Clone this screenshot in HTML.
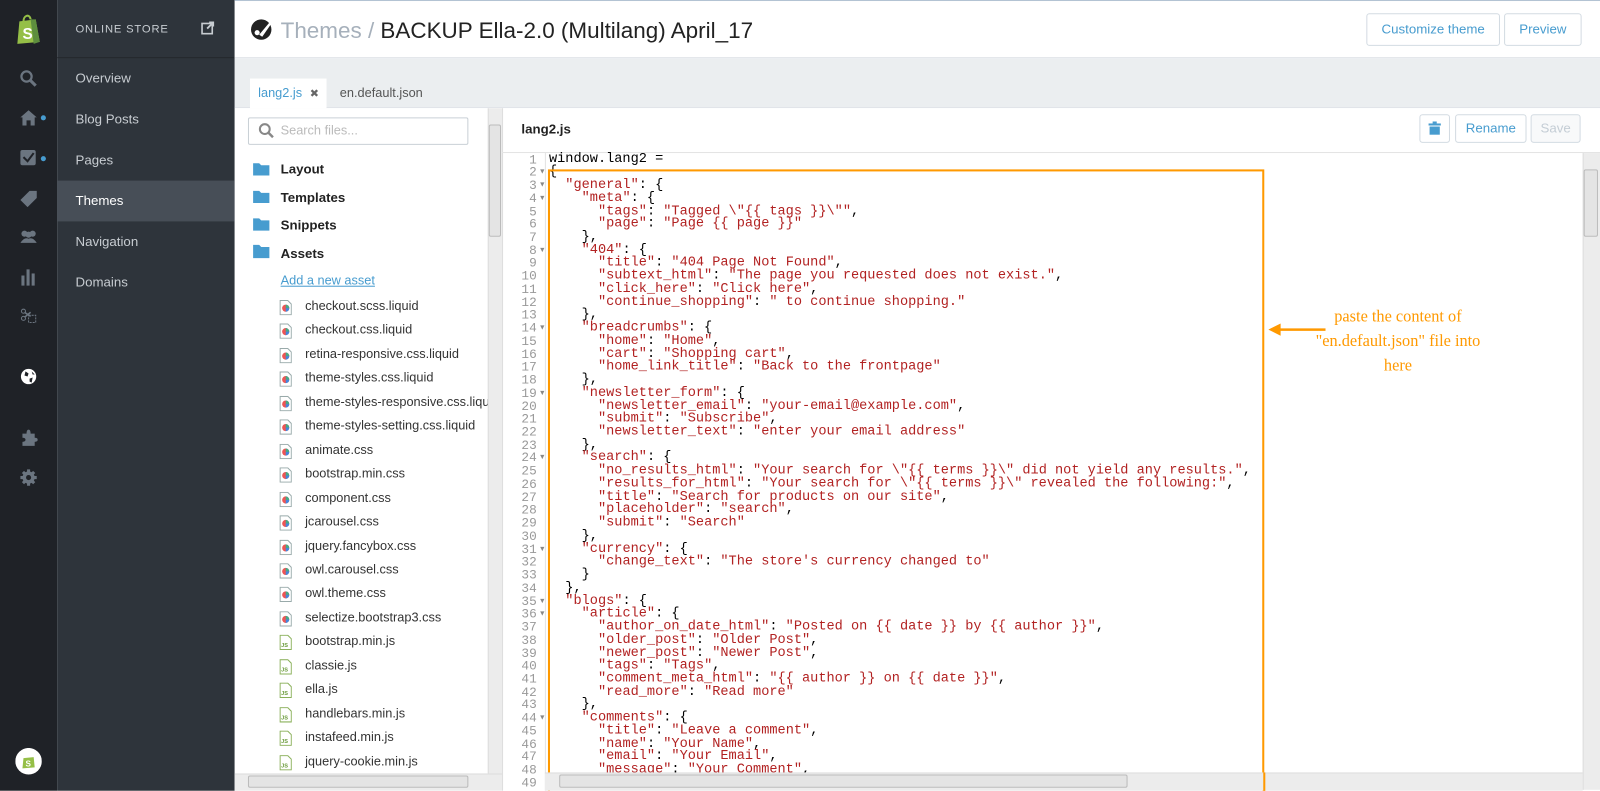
<!DOCTYPE html>
<html><head><meta charset="utf-8"><style>
*{margin:0;padding:0;box-sizing:border-box}
html,body{width:1600px;height:790px;overflow:hidden;background:#fff}
#wrap{position:absolute;left:0;top:0;width:1568px;height:775px;transform:scale(1.020408);transform-origin:0 0;font-family:"Liberation Sans",sans-serif;overflow:hidden}
.abs{position:absolute}
#rail{left:0;top:0;width:56px;height:775px;background:#1f2227}
#side{left:56px;top:0;width:174px;height:775px;background:#2e343b}
#side .hd{height:57px;border-bottom:1px solid #24282d;color:#c7ccd1;font-size:11px;letter-spacing:.8px;padding:23px 0 0 18px}
#side .it{height:40px;line-height:40px;padding-left:18px;color:#c7ccd1;font-size:13px}
#side .act{background:#474e57;color:#fff}
#hdr{left:230px;top:0;width:1340px;height:57px;border-top:1px solid #b3c3d3;border-bottom:1px solid #dfe3e8;background:#fff}
.btn{position:absolute;border:1px solid #d3dbe2;border-radius:3px;color:#479ccf;font-size:13px;text-align:center;background:#fff}
#tabs{left:230px;top:57px;width:1340px;height:49px;background:#ebeef0;border-bottom:1px solid #dfe3e8}
#files{left:230px;top:106px;width:262px;height:669px;background:#fff;overflow:hidden}
.fo{position:absolute;left:18px;font-size:13px;font-weight:bold;color:#222}
.fi{position:absolute;left:69px;font-size:12.5px;color:#333;white-space:nowrap}
#code{position:absolute;left:538px;top:150.6px;font-family:"Liberation Mono",monospace;font-size:13.33px;line-height:12.73px;color:#000;white-space:pre}
#code b{font-weight:normal;color:#b22222}
#nums{position:absolute;left:492px;width:34px;top:150.6px;font-family:"Liberation Mono",monospace;font-size:12.5px;line-height:12.73px;color:#999;text-align:right;white-space:pre}
.sb{background:#ececec}
</style></head><body><div id="wrap">
<div id="rail" class="abs">
 <svg class="abs" style="left:15px;top:13px" width="26" height="31" viewBox="0 0 26 31"><path d="M4 8 L20 6 L24 28 L2 30 Z" fill="#95bf47"/><path d="M8 8 C8 2 14 0 15 6" stroke="#95bf47" stroke-width="2" fill="none"/><path d="M15 6 L20 6 L24 28 L18 30Z" fill="#5e8e3e"/><text x="7" y="25" font-size="15" font-weight="bold" fill="#fff" font-family="Liberation Sans">S</text></svg>
 <svg class="abs" style="left:19px;top:68px" width="18" height="18"><circle cx="7" cy="7" r="5" stroke="#6b7580" stroke-width="2.2" fill="none"/><path d="M11 11 L16 16" stroke="#6b7580" stroke-width="3"/></svg>
 <svg class="abs" style="left:19px;top:106px" width="18" height="18"><path d="M1 9 L9 2 L17 9 L15 9 L15 17 L11 17 L11 12 L7 12 L7 17 L3 17 L3 9Z" fill="#6b7580"/></svg>
 <div class="abs" style="left:40px;top:113px;width:5px;height:5px;border-radius:50%;background:#479ccf"></div>
 <svg class="abs" style="left:19px;top:146px" width="18" height="18"><rect x="1" y="1" width="15" height="15" rx="2" fill="#6b7580"/><path d="M4 8 L8 12 L14 4" stroke="#1f2227" stroke-width="2" fill="none"/></svg>
 <div class="abs" style="left:40px;top:153px;width:5px;height:5px;border-radius:50%;background:#479ccf"></div>
 <svg class="abs" style="left:19px;top:185px" width="18" height="18"><path d="M1 11 L10 2 L17 2 L17 9 L8 18Z" fill="#6b7580"/></svg>
 <svg class="abs" style="left:19px;top:224px" width="18" height="16"><circle cx="5" cy="5" r="3" fill="#6b7580"/><circle cx="13" cy="5" r="3" fill="#6b7580"/><circle cx="9" cy="6" r="3" fill="#6b7580"/><path d="M1 14 Q5 8 9 10 Q13 8 17 14Z" fill="#6b7580"/></svg>
 <svg class="abs" style="left:20px;top:262px" width="16" height="18"><rect x="1" y="8" width="3" height="10" fill="#6b7580"/><rect x="6" y="2" width="3" height="16" fill="#6b7580"/><rect x="11" y="6" width="3" height="12" fill="#6b7580"/></svg>
 <svg class="abs" style="left:19px;top:302px" width="18" height="16"><circle cx="4" cy="3" r="2" stroke="#6b7580" fill="none"/><circle cx="4" cy="10" r="2" stroke="#6b7580" fill="none"/><path d="M5 4 L11 8 M5 9 L11 4" stroke="#6b7580" stroke-width="1.5"/><rect x="9" y="7" width="7" height="7" stroke="#6b7580" stroke-dasharray="2 1" fill="none"/></svg>
 <svg class="abs" style="left:19px;top:360px" width="18" height="18"><circle cx="9" cy="9" r="7.5" fill="#fff"/><path d="M6 4 L9 6 L8 9 L5 8Z M10 11 L13 10 L12 15 L10 14Z M12 4 L15 7 L13 7Z" fill="#1f2227"/></svg>
 <svg class="abs" style="left:19px;top:420px" width="18" height="18"><path d="M3 5 L7 5 Q7 1 9 1 Q11 1 11 5 L15 5 L15 9 Q18 9 18 11 Q18 13 15 13 L15 17 L3 17 L3 13 Q6 13 6 11 Q6 9 3 9Z" fill="#6b7580"/></svg>
 <svg class="abs" style="left:19px;top:459px" width="18" height="18"><circle cx="9" cy="9" r="6" fill="#6b7580"/><path d="M9 1 V17 M1 9 H17 M3.5 3.5 L14.5 14.5 M14.5 3.5 L3.5 14.5" stroke="#6b7580" stroke-width="3"/><circle cx="9" cy="9" r="2.5" fill="#1f2227"/></svg>
 <svg class="abs" style="left:15px;top:733px" width="26" height="26"><circle cx="13" cy="13" r="13" fill="#fff"/><path d="M8 10 L18 9 L19 19 L7 20Z" fill="#95bf47"/><text x="10" y="18" font-size="8" font-weight="bold" fill="#fff" font-family="Liberation Sans">S</text></svg>
</div>
<div id="side" class="abs">
 <div class="hd">ONLINE STORE</div>
 <svg class="abs" style="left:141px;top:21px" width="13" height="13"><rect x="1" y="2" width="10" height="10" stroke="#c7ccd1" stroke-width="1.6" fill="none"/><path d="M6 7 L12 1 M8 1 H12 V5" stroke="#c7ccd1" stroke-width="1.8" fill="none"/></svg>
 <div class="it">Overview</div><div class="it">Blog Posts</div><div class="it">Pages</div><div class="it act">Themes</div><div class="it">Navigation</div><div class="it">Domains</div>
</div>
<div id="hdr" class="abs">
 <svg class="abs" style="left:15px;top:17px" width="22" height="22"><circle cx="11" cy="11" r="10" fill="#222"/><path d="M9 16 L20 3 L21 5 L12 18Z" fill="#fff"/><circle cx="7" cy="14" r="2.5" fill="#fff"/></svg>
 <div class="abs" style="left:45px;top:16px;font-size:22px;color:#a6b0bb;white-space:nowrap">Themes / <span style="color:#222">BACKUP Ella-2.0 (Multilang) April_17</span></div>
 <div class="btn" style="left:1109px;top:12px;width:131px;height:32px;line-height:30px">Customize theme</div>
 <div class="btn" style="left:1244px;top:12px;width:76px;height:32px;line-height:30px">Preview</div>
</div>
<div id="tabs" class="abs">
 <div class="abs" style="left:15px;top:20px;width:75px;height:29px;background:#fff;color:#479ccf;font-size:12.5px;padding:7px 0 0 8px">lang2.js <span style="color:#666;font-size:11px;margin-left:4px">✖</span></div>
 <div class="abs" style="left:103px;top:27px;color:#555;font-size:12.5px">en.default.json</div>
</div>
<div id="files" class="abs">
 <div class="abs" style="left:13px;top:9px;width:216px;height:27px;border:1px solid #c9d0d6;border-radius:2px"></div>
 <svg class="abs" style="left:23px;top:14px" width="16" height="16"><circle cx="6.5" cy="6.5" r="4.8" stroke="#888" stroke-width="2" fill="none"/><path d="M10 10 L14.5 14.5" stroke="#888" stroke-width="2.4"/></svg>
 <div class="abs" style="left:45px;top:15px;font-size:12.5px;color:#bbb">Search files...</div>
 <svg class="abs" style="left:18px;top:52px" width="17" height="96" fill="#479ccf"><path d="M0 2 H6 L8 4 H16 V14 H0Z"/><path d="M0 29 H6 L8 31 H16 V41 H0Z"/><path d="M0 56 H6 L8 58 H16 V68 H0Z"/><path d="M0 82 H6 L8 84 H16 V95 H0Z"/></svg>
 <div class="fo" style="left:45px;top:52px">Layout</div>
 <div class="fo" style="left:45px;top:80px">Templates</div>
 <div class="fo" style="left:45px;top:107px">Snippets</div>
 <div class="fo" style="left:45px;top:135px">Assets</div>
 <div class="abs" style="left:45px;top:162px;font-size:12.5px;color:#479ccf;text-decoration:underline">Add a new asset</div>
 <div id="fl"></div>
 <div class="abs sb" style="left:248px;top:0;width:14px;height:652px;border-left:1px solid #ddd"></div>
 <div class="abs" style="left:249px;top:16px;width:12px;height:110px;border:1px solid #bbb;border-radius:2px;background:#e4e4e4"></div>
 <div class="abs sb" style="left:0;top:652px;width:262px;height:17px;border-top:1px solid #ddd"></div>
 <div class="abs" style="left:13px;top:654px;width:216px;height:12px;border:1px solid #bbb;border-radius:2px;background:#e4e4e4"></div>
</div>
<div class="abs" style="left:492px;top:106px;width:1076px;height:669px;background:#fff;border-left:1px solid #ddd"></div>
<div class="abs" style="left:511px;top:119px;font-size:13px;font-weight:bold;color:#222">lang2.js</div>
<div class="btn" style="left:1391px;top:112px;width:30px;height:28px"><svg width="14" height="14" style="margin-top:6px"><rect x="1" y="2" width="12" height="2" fill="#479ccf"/><rect x="5" y="0" width="4" height="2" fill="#479ccf"/><rect x="2" y="5" width="10" height="8" fill="#479ccf"/></svg></div>
<div class="btn" style="left:1426px;top:112px;width:70px;height:28px;line-height:26px">Rename</div>
<div class="btn" style="left:1500px;top:112px;width:49px;height:28px;line-height:26px;color:#c4cdd5;background:#f8f9fa">Save</div>
<div class="abs" style="left:492px;top:149px;width:1076px;height:1px;background:#e3e3e3"></div>
<div class="abs" style="left:534px;top:150px;width:1px;height:625px;background:#e3e3e3"></div>
<div id="nums"></div>
<div id="folds" class="abs" style="left:528px;top:150.6px;font-size:7px;color:#888;line-height:12.73px"></div>
<div id="code"></div>
<div class="abs" style="left:537px;top:166px;width:702px;height:640px;border:2px solid #ff9900"></div>
<svg class="abs" style="left:1241px;top:315px" width="60" height="16"><path d="M2 8 L14 2 L14 14Z" fill="#ff9900"/><path d="M12 8 H58" stroke="#ff9900" stroke-width="2.5"/></svg>
<div class="abs" style="left:1255px;top:299px;width:230px;text-align:center;font-family:'Liberation Serif',serif;font-size:16px;line-height:24px;color:#ff9900">paste the content of<br>"en.default.json" file into<br>here</div>
<div class="abs sb" style="left:1551px;top:150px;width:17px;height:624px;border-left:1px solid #ddd"></div>
<div class="abs" style="left:1552px;top:166px;width:14px;height:66px;border:1px solid #bbb;border-radius:2px;background:#e4e4e4"></div>
<div class="abs sb" style="left:534px;top:757px;width:1017px;height:18px;border-top:1px solid #ddd"></div>
<div class="abs" style="left:548px;top:759px;width:557px;height:13px;border:1px solid #bbb;border-radius:2px;background:#e4e4e4"></div>
<div class="abs" style="left:1238px;top:757px;width:2px;height:33px;background:#ff9900"></div>
</div>
<script>
var files=[["checkout.scss.liquid",0],["checkout.css.liquid",0],["retina-responsive.css.liquid",0],["theme-styles.css.liquid",0],["theme-styles-responsive.css.liquid",0],["theme-styles-setting.css.liquid",0],["animate.css",0],["bootstrap.min.css",0],["component.css",0],["jcarousel.css",0],["jquery.fancybox.css",0],["owl.carousel.css",0],["owl.theme.css",0],["selectize.bootstrap3.css",0],["bootstrap.min.js",1],["classie.js",1],["ella.js",1],["handlebars.min.js",1],["instafeed.min.js",1],["jquery-cookie.min.js",1]];
var h="";files.forEach(function(f,i){var y=187+i*23.45;
h+='<svg class="abs" style="left:44px;top:'+(y+1)+'px" width="12" height="15"><path d="M0.5 0.5 H8 L11.5 4 V14.5 H0.5Z" fill="#fff" stroke="'+(f[1]?'#8ab05a':'#9aa')+'"/>'+(f[1]?'<text x="1.5" y="12" font-size="5.5" fill="#6a9a3a" font-family="Liberation Sans" font-weight="bold">JS</text>':'<circle cx="6" cy="8" r="3.5" fill="#e55"/><path d="M6 8 L6 4.5 A3.5 3.5 0 0 1 9.5 8Z" fill="#4a8"/><path d="M6 8 L9.5 8 A3.5 3.5 0 0 1 6 11.5Z" fill="#48d"/>')+'</svg>';
h+='<div class="fi" style="top:'+y+'px">'+f[0]+'</div>';});
document.getElementById("fl").innerHTML=h;
var L=['window.lang2 =','{','  "general": {','    "meta": {','      "tags": "Tagged \\"{{ tags }}\\"",','      "page": "Page {{ page }}"','    },','    "404": {','      "title": "404 Page Not Found",','      "subtext_html": "The page you requested does not exist.",','      "click_here": "Click here",','      "continue_shopping": " to continue shopping."','    },','    "breadcrumbs": {','      "home": "Home",','      "cart": "Shopping cart",','      "home_link_title": "Back to the frontpage"','    },','    "newsletter_form": {','      "newsletter_email": "your-email@example.com",','      "submit": "Subscribe",','      "newsletter_text": "enter your email address"','    },','    "search": {','      "no_results_html": "Your search for \\"{{ terms }}\\" did not yield any results.",','      "results_for_html": "Your search for \\"{{ terms }}\\" revealed the following:",','      "title": "Search for products on our site",','      "placeholder": "search",','      "submit": "Search"','    },','    "currency": {','      "change_text": "The store\'s currency changed to"','    }','  },','  "blogs": {','    "article": {','      "author_on_date_html": "Posted on {{ date }} by {{ author }}",','      "older_post": "Older Post",','      "newer_post": "Newer Post",','      "tags": "Tags",','      "comment_meta_html": "{{ author }} on {{ date }}",','      "read_more": "Read more"','    },','    "comments": {','      "title": "Leave a comment",','      "name": "Your Name",','      "email": "Your Email",','      "message": "Your Comment",',''];
function esc(s){return s.replace(/&/g,'&amp;').replace(/</g,'&lt;');}
var c="",n="",fd="",folds=[2,3,4,8,14,19,24,31,35,36,44];
L.forEach(function(l,i){c+=esc(l).replace(/"(?:[^"\\]|\\.)*"/g,function(m){return '<b>'+m+'</b>';})+"\n";n+=(i+1)+"\n";fd+=(folds.indexOf(i+1)>=0?'▼':'&nbsp;')+"<br>";});
document.getElementById("code").innerHTML=c;document.getElementById("nums").textContent=n;document.getElementById("folds").innerHTML=fd;
</script>
</body></html>
